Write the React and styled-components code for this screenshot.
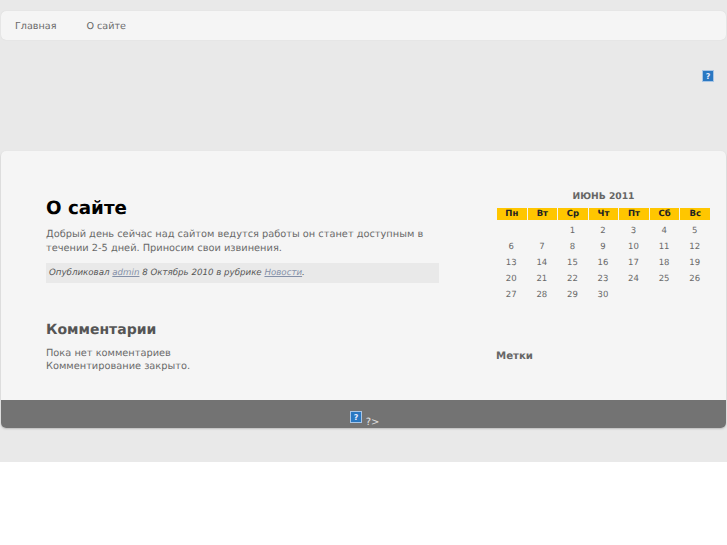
import React from 'react';
import styled, { createGlobalStyle } from 'styled-components';

const GlobalStyle = createGlobalStyle`
  html, body {
    margin: 0;
    padding: 0;
    background: #fff;
  }
  body {
    font-family: 'DejaVu Sans', Verdana, sans-serif;
    font-size: 9.8px;
    color: #696969;
    text-rendering: geometricPrecision;
  }
`;

const Page = styled.div`
  height: 462px;
  background: #e9e9e9;
  padding: 11px 1px 0;
  box-sizing: border-box;
`;

const NavBar = styled.nav`
  display: flex;
  height: 29px;
  box-sizing: border-box;
  align-items: center;
  padding: 1px 0 0 14px;
  gap: 30px;
  background: #f5f5f5;
  border-radius: 5px;
  box-shadow: 0 0 1px #ccc;
`;

const NavLink = styled.a`
  color: #696969;
  font-size: 9.6px;
  text-decoration: none;
`;

const Banner = styled.div`
  display: flex;
  justify-content: flex-end;
  height: 111px;
  padding: 30px 12px 0 0;
  box-sizing: border-box;
`;

const Card = styled.main`
  border-radius: 5px;
  overflow: hidden;
  background: #f5f5f5;
  box-shadow: 0 1px 2px #bbb;
`;

const Columns = styled.div`
  display: grid;
  grid-template-columns: 393px 215px;
  column-gap: 57px;
  height: 249px;
  padding-left: 45px;
`;

const Post = styled.article`
  padding-top: 46px;
`;

const Title = styled.h1`
  margin: 0 0 7px;
  font-size: 18.3px;
  line-height: 24px;
  color: #000;
`;

const Body = styled.p`
  margin: 0 0 7px;
  line-height: 14px;
`;

const Meta = styled.div`
  height: 20px;
  line-height: 20px;
  padding-left: 3px;
  font-size: 8.66px;
  font-style: italic;
  background: #e9e9e9;
  color: #555;

  a {
    color: #8490a8;
    text-decoration: underline;
  }
`;

const SectionTitle = styled.h2`
  margin: 38px 0 8px;
  font-size: 14px;
  line-height: 18px;
  color: #555;
`;

const Comments = styled.p`
  margin: 0;
  line-height: 13px;
`;

const Sidebar = styled.aside`
  padding-top: 39px;
`;

const Calendar = styled.table`
  border-collapse: separate;
  border-spacing: 1px 0;
  width: 215px;
  table-layout: fixed;
  font-size: 8.5px;
`;

const Caption = styled.caption`
  font-size: 9.2px;
  font-weight: bold;
  line-height: 13px;
  padding-bottom: 5px;
  color: #666;
`;

const DayHead = styled.th`
  height: 12px;
  padding: 0;
  background: #ffc600;
  color: #222;
  font-size: 8.5px;
  line-height: 12px;
`;

const DayCell = styled.td`
  height: 16px;
  padding: 0 1px 0 0;
  text-align: center;
  line-height: 16px;
  color: #696969;
`;

const SpacerRow = styled.tr`
  height: 3px;
`;

const TagsTitle = styled.h3`
  margin: 47px 0 0;
  font-size: 10.2px;
  line-height: 13px;
  color: #666;
`;

const Footer = styled.footer`
  display: flex;
  justify-content: center;
  align-items: flex-start;
  gap: 4px;
  height: 28px;
  padding: 11px 0 0 2px;
  box-sizing: border-box;
  background: #737373;
  color: #e4e4e4;
  font-size: 10px;
  line-height: 12px;
`;

const FooterText = styled.span`
  margin-top: 6px;
`;

const BrokenIcon = () => (
  <svg width="12" height="12" viewBox="0 0 12 12" style={{ display: 'block' }}>
    <rect x="0.5" y="0.5" width="11" height="11" fill="#2a78c2" stroke="#a9c6e6" />
    <text x="6" y="9" textAnchor="middle" fontSize="8" fontWeight="bold" fill="#eef" fontFamily="DejaVu Sans">?</text>
  </svg>
);

const weeks = [
  ['', '', '1', '2', '3', '4', '5'],
  ['6', '7', '8', '9', '10', '11', '12'],
  ['13', '14', '15', '16', '17', '18', '19'],
  ['20', '21', '22', '23', '24', '25', '26'],
  ['27', '28', '29', '30', '', '', ''],
];

const days = ['Пн', 'Вт', 'Ср', 'Чт', 'Пт', 'Сб', 'Вс'];

const App = () => (
  <>
    <GlobalStyle />
    <Page>
      <NavBar>
        <NavLink href="#">Главная</NavLink>
        <NavLink href="#">О сайте</NavLink>
      </NavBar>
      <Banner>
        <BrokenIcon />
      </Banner>
      <Card>
        <Columns>
          <Post>
            <Title>О сайте</Title>
            <Body>
              Добрый день сейчас над сайтом ведутся работы он станет доступным в течении 2-5 дней. Приносим свои извинения.
            </Body>
            <Meta>
              Опубликовал <a href="#">admin</a> 8 Октябрь 2010 в рубрике <a href="#">Новости</a>.
            </Meta>
            <SectionTitle>Комментарии</SectionTitle>
            <Comments>
              Пока нет комментариев
              <br />
              Комментирование закрыто.
            </Comments>
          </Post>
          <Sidebar>
            <Calendar>
              <Caption>ИЮНЬ 2011</Caption>
              <thead>
                <tr>
                  {days.map((d) => (
                    <DayHead key={d}>{d}</DayHead>
                  ))}
                </tr>
              </thead>
              <tbody>
                <SpacerRow />
                {weeks.map((week, i) => (
                  <tr key={i}>
                    {week.map((d, j) => (
                      <DayCell key={j}>{d}</DayCell>
                    ))}
                  </tr>
                ))}
              </tbody>
            </Calendar>
            <TagsTitle>Метки</TagsTitle>
          </Sidebar>
        </Columns>
        <Footer>
          <BrokenIcon />
          <FooterText>?&gt;</FooterText>
        </Footer>
      </Card>
    </Page>
  </>
);

export default App;
